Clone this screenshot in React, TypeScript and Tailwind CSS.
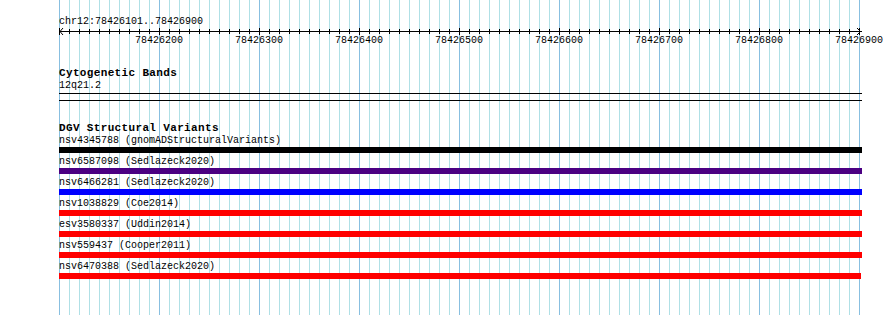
const gridXs = Array.from({ length: 81 }, (_, i) => 59 + i * 10);
const tickLabels = [78426200, 78426300, 78426400, 78426500, 78426600, 78426700, 78426800, 78426900];

const MAJOR_LINE = "absolute top-0 h-full w-px bg-[#88bfe0]";
const MINOR_LINE = "absolute top-0 h-full w-px bg-[#b0e0e6]";

const variants = [
  { name: "nsv4345788", study: "gnomADStructuralVariants", color: "bg-black", width: "w-[803px]" },
  { name: "nsv6587098", study: "Sedlazeck2020", color: "bg-[#4b0082]", width: "w-[803px]" },
  { name: "nsv6466281", study: "Sedlazeck2020", color: "bg-[#0000ff]", width: "w-[803px]" },
  { name: "nsv1038829", study: "Coe2014", color: "bg-[#ff0000]", width: "w-[803px]" },
  { name: "esv3580337", study: "Uddin2014", color: "bg-[#ff0000]", width: "w-[803px]" },
  { name: "nsv559437", study: "Cooper2011", color: "bg-[#ff0000]", width: "w-[803px]" },
  { name: "nsv6470388", study: "Sedlazeck2020", color: "bg-[#ff0000]", width: "w-[802px]" },
];

function Gridlines() {
  return (
    <div className="absolute inset-0 pointer-events-none">
      {gridXs.map((x, i) => (
        <div key={x} className={i % 10 === 0 ? MAJOR_LINE : MINOR_LINE} style={{ left: x }} />
      ))}
    </div>
  );
}

function Ruler() {
  const ticks = Array.from({ length: 81 }, (_, i) => i * 10);
  return (
    <svg width="803" height="7" className="block" shapeRendering="crispEdges">
      <rect x="0" y="3" width="803" height="1" fill="#000" />
      {ticks.map((x) =>
        x % 100 === 0 ? (
          <rect key={x} x={x} y="0" width="1" height="7" fill="#000" />
        ) : (
          <rect key={x} x={x} y="1" width="1" height="5" fill="#000" />
        )
      )}
      <polyline points="4,0 1,3.5 4,7" fill="none" stroke="#000" strokeWidth="1" shapeRendering="auto" />
      <polyline points="798,0 801.5,3.5 798,7" fill="none" stroke="#000" strokeWidth="1" shapeRendering="auto" />
    </svg>
  );
}

export default function App() {
  return (
    <div className="relative w-[890px] h-[315px] overflow-hidden bg-white text-black font-['Liberation_Mono',monospace] text-[10px]">
      <Gridlines />
      <div className="relative flex flex-col pl-[59px] pt-[16px]">
        <div className="leading-[12px] h-[12px] whitespace-pre">chr12:78426101..78426900</div>
        <Ruler />
        <div className="flex ml-[50px] leading-[12px] h-[12px] whitespace-nowrap">
          {tickLabels.map((t) => (
            <div key={t} className="w-[100px] shrink-0 text-center">{t}</div>
          ))}
        </div>

        <div className="mt-[20px] font-bold text-[11px] leading-[13px] h-[13px] tracking-[0.35px]">Cytogenetic Bands</div>
        <div className="leading-[12px] h-[12px]">12q21.2</div>
        <div className="mt-px h-px w-[803px] bg-black" />
        <div className="mt-[6px] h-px w-[803px] bg-black" />

        <div className="mt-[21px] font-bold text-[11px] leading-[13px] h-[13px] tracking-[0.35px]">DGV Structural Variants</div>
        <div className="flex flex-col gap-[3px]">
          {variants.map((v) => (
            <div key={v.name} className="flex flex-col">
              <div className="leading-[12px] h-[12px] whitespace-pre">{`${v.name} (${v.study})`}</div>
              <div className={`h-[6px] ${v.width} ${v.color}`} />
            </div>
          ))}
        </div>
      </div>
    </div>
  );
}
